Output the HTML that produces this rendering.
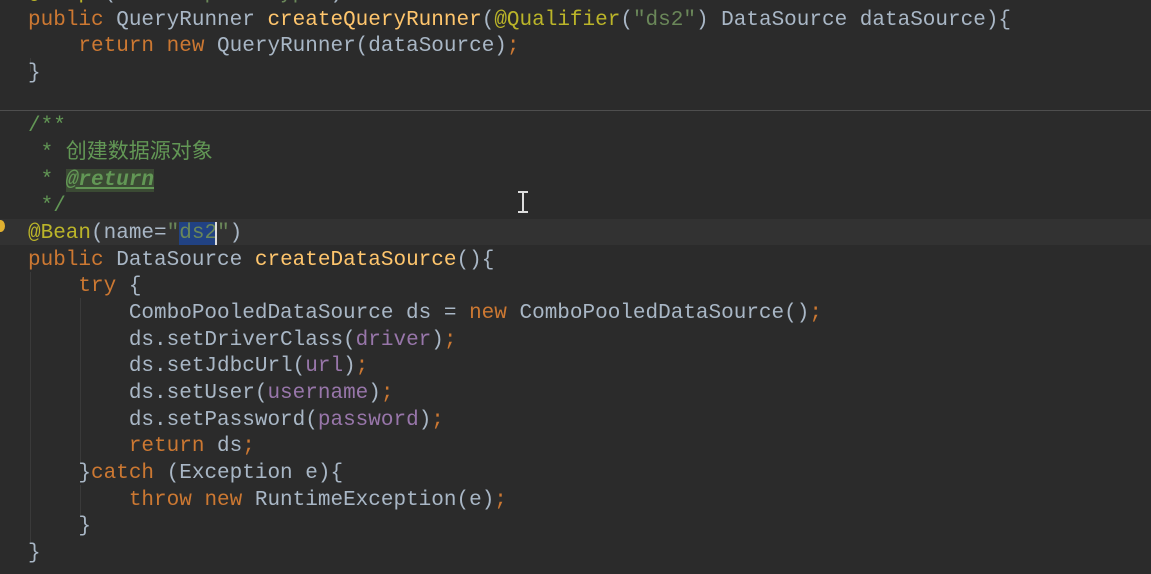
<!DOCTYPE html>
<html><head><meta charset="utf-8"><style>
body{margin:0;width:1151px;height:571px;background:#2b2b2b;overflow:hidden;position:relative;font-family:"Liberation Mono","Noto Sans CJK SC",monospace;font-size:21px;color:#a9b7c6}
#w{position:absolute;left:0;top:3px;width:1151px;height:571px}
.l{position:absolute;left:28px;height:26.65px;line-height:26.65px;white-space:pre;width:1123px}
.k{color:#cc7832}.a{color:#bbb529}.s{color:#6a8759}.c{color:#629755}.f{color:#9876aa}.m{color:#ffc66d}
.t{color:#629755;font-style:italic;font-weight:bold;background:#3b4a34;text-decoration:underline}
.sel{background:#214283}
.g{position:absolute;width:1px;background:#3a3a3a}
</style></head><body>
<div style="position:absolute;left:0;top:219px;width:1151px;height:26px;background:#323232"></div>
<div style="position:absolute;left:0;top:110px;width:1151px;height:1px;background:#4e4e4e"></div>
<div class="g" style="left:30px;top:58px;height:14px"></div>
<div class="g" style="left:30px;top:272px;height:270px"></div>
<div class="g" style="left:80px;top:298px;height:165px"></div>
<div class="g" style="left:80px;top:485px;height:30px"></div>
<div style="position:absolute;left:-4px;top:220px;width:9px;height:12px;border-radius:50%;background:#e0b030"></div>
<div id="w">
<div class="l" style="top:-22px"><span class="a">@Scope</span>(<span class="f">value</span>=<span class="s">"prototype"</span>)</div>
<div class="l" style="top:4.7px"><span class="k">public</span> QueryRunner <span class="m">createQueryRunner</span>(<span class="a">@Qualifier</span>(<span class="s">"ds2"</span>) DataSource dataSource){</div>
<div class="l" style="top:31.3px">    <span class="k">return new</span> QueryRunner(dataSource)<span class="k">;</span></div>
<div class="l" style="top:58px">}</div>
<div class="l c" style="top:111.3px">/**</div>
<div class="l c" style="top:138px"> * 创建数据源对象</div>
<div class="l c" style="top:164.6px"> * <span class="t">@return</span></div>
<div class="l c" style="top:191.3px"> */</div>
<div class="l" style="top:218px"><span class="a">@Bean</span>(name=<span class="s">"<span class="sel">ds2</span><span style="border-left:2px solid #ddd;margin-left:-2px"></span>"</span>)</div>
<div class="l" style="top:244.6px"><span class="k">public</span> DataSource <span class="m">createDataSource</span>(){</div>
<div class="l" style="top:271.3px">    <span class="k">try</span> {</div>
<div class="l" style="top:297.9px">        ComboPooledDataSource ds = <span class="k">new</span> ComboPooledDataSource()<span class="k">;</span></div>
<div class="l" style="top:324.6px">        ds.setDriverClass(<span class="f">driver</span>)<span class="k">;</span></div>
<div class="l" style="top:351.2px">        ds.setJdbcUrl(<span class="f">url</span>)<span class="k">;</span></div>
<div class="l" style="top:377.9px">        ds.setUser(<span class="f">username</span>)<span class="k">;</span></div>
<div class="l" style="top:404.5px">        ds.setPassword(<span class="f">password</span>)<span class="k">;</span></div>
<div class="l" style="top:431.2px">        <span class="k">return</span> ds<span class="k">;</span></div>
<div class="l" style="top:457.8px">    }<span class="k">catch</span> (Exception e){</div>
<div class="l" style="top:484.5px">        <span class="k">throw new</span> RuntimeException(e)<span class="k">;</span></div>
<div class="l" style="top:511.1px">    }</div>
<div class="l" style="top:537.8px">}</div>
</div>
<div style="position:absolute;left:518px;top:191px;width:10px;height:22px">
<div style="position:absolute;left:4px;top:0;width:2px;height:22px;background:#ddd"></div>
<div style="position:absolute;left:0;top:0;width:10px;height:2px;background:#ddd"></div>
<div style="position:absolute;left:0;top:20px;width:10px;height:2px;background:#ddd"></div>
</div>
</body></html>
